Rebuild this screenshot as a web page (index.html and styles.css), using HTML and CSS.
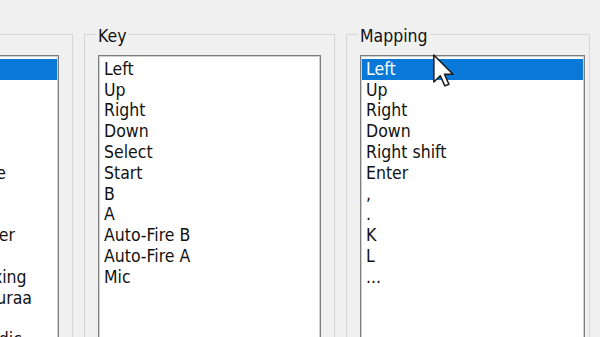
FILE: index.html
```html
<!DOCTYPE html>
<html lang="en">

<head>
    <meta charset="UTF-8">
    <title>Input mapping</title>
    <link rel="stylesheet" href="styles.css">
</head>

<body>
    <div class="dialog">
        <fieldset class="group group-games">
            <legend>Games</legend>
            <ul class="listbox">
                <li class="selected">Qix</li>
                <li>Go</li>
                <li>Go</li>
                <li>Go</li>
                <li>Go</li>
                <li>Fate</li>
                <li>Go</li>
                <li>Go</li>
                <li>Diver</li>
                <li>Go</li>
                <li>Boxing</li>
                <li>Mauraa</li>
                <li>Go</li>
                <li>Sordic</li>
            </ul>
        </fieldset>

        <fieldset class="group group-key">
            <legend>Key</legend>
            <ul class="listbox">
                <li>Left</li>
                <li>Up</li>
                <li>Right</li>
                <li>Down</li>
                <li>Select</li>
                <li>Start</li>
                <li>B</li>
                <li>A</li>
                <li>Auto-Fire B</li>
                <li>Auto-Fire A</li>
                <li>Mic</li>
            </ul>
        </fieldset>

        <fieldset class="group group-mapping">
            <legend>Mapping</legend>
            <ul class="listbox">
                <li class="selected">Left</li>
                <li>Up</li>
                <li>Right</li>
                <li>Down</li>
                <li>Right shift</li>
                <li>Enter</li>
                <li>,</li>
                <li>.</li>
                <li>K</li>
                <li>L</li>
                <li>...</li>
            </ul>
        </fieldset>
    </div>

    <!-- mouse pointer over the mapping list -->
    <svg class="cursor" width="22" height="34" viewBox="0 0 13 20">
        <path d="M0.5 0.5 L0.5 16.5 L4.3 12.8 L7 18.8 L9.4 17.8 L6.8 11.9 L11.8 11.9 Z"
            fill="#fff" stroke="#1a1a1a" stroke-width="0.9" stroke-linejoin="round" />
    </svg>
</body>

</html>
```

FILE: styles.css
```css
html,
body {
    margin: 0;
    height: 100%;
    overflow: hidden;
}

body {
    position: relative;
    background: #f0f0f0;
    font-family: "DejaVu Sans Condensed", "Liberation Sans", sans-serif;
    font-size: 17.5px;
    color: #111;
}

.dialog {
    display: flex;
    gap: 11px;
    margin-left: -47px;
    padding-top: 22px;
}

.group {
    box-sizing: border-box;
    margin: 0;
    padding: 8px 13px 0 13px;
    border: 1px solid #d6d6d6;
    height: 360px;
}

.group legend {
    margin-left: -2px;
    padding: 4px 2px 0 2px;
    line-height: 20.8px;
}

.group-games {
    width: 120px;
}

/* caption of the first group sits off the left edge */
.group-games legend {
    margin-left: -28px;
}

.group-key {
    width: 251px;
}

.group-mapping {
    width: 244px;
    padding-right: 4px;
}

.listbox {
    list-style: none;
    margin: 0;
    padding: 3px 0 0 0;
    height: 320px;
    background: #fff;
    border: 1px solid #7e7e7e;
    box-shadow: inset 0 0 0 1px #cfcfcf;
    line-height: 20.8px;
    white-space: nowrap;
    overflow: hidden;
}

.listbox li {
    padding-left: 4px;
    margin: 0 1px;
}

.listbox li.selected {
    background: #0a78d7;
    color: #fff;
}

.cursor {
    position: absolute;
    left: 433px;
    top: 54px;
}
```
